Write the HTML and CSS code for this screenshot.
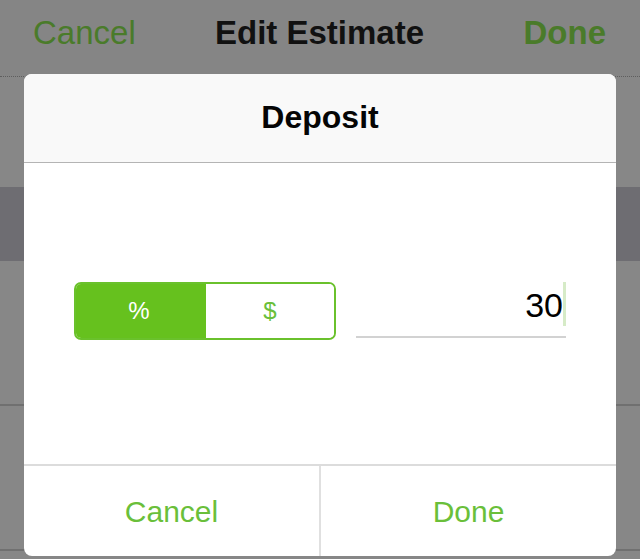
FILE: index.html
```html
<!DOCTYPE html>
<html>
<head>
<meta charset="utf-8">
<link rel="stylesheet" href="styles.css">
</head>
<body>
<div class="screen">
  <header class="nav">
    <span class="nav-btn nav-left">Cancel</span>
    <span class="nav-title">Edit Estimate</span>
    <span class="nav-btn nav-right">Done</span>
  </header>
  <div class="row row-a"></div>
  <div class="row row-dark"></div>
  <div class="row row-b"></div>
  <div class="row row-c"></div>
  <div class="row row-d"></div>

  <div class="modal">
    <div class="modal-head">Deposit</div>
    <div class="modal-body">
      <div class="segmented">
        <div class="seg seg-on">%</div>
        <div class="seg">$</div>
      </div>
      <div class="field">
        <span class="field-value">30</span>
        <span class="caret"></span>
      </div>
    </div>
    <div class="modal-foot">
      <div class="foot-btn">Cancel</div>
      <div class="foot-btn foot-right">Done</div>
    </div>
  </div>
</div>
</body>
</html>
```
FILE: styles.css
```css
* { box-sizing: border-box; }
html, body {
  margin: 0;
  padding: 0;
  background: #878787;
  font-family: "Liberation Sans", Arial, sans-serif;
}
.screen {
  position: relative;
  width: 640px;
  height: 559px;
  overflow: hidden;
  background: #878787;
}
.nav {
  height: 77px;
  display: grid;
  grid-template-columns: 1fr auto 1fr;
  align-items: center;
  padding: 0 34px 11px 33px;
  border-bottom: 1px dotted #5e5e5e;
  background: #858585;
}
.nav-btn {
  font-size: 33px;
  color: #4a7b2a;
}
.nav-left { justify-self: start; }
.nav-right { justify-self: end; font-weight: bold; }
.nav-title {
  font-size: 33px;
  font-weight: bold;
  color: #111111;
}
.row-a { height: 110px; }
.row-dark { height: 74px; background: #6e6d72; }
.row-b { height: 145px; border-bottom: 2px solid #707070; }
.row-c { height: 145px; border-bottom: 2px solid #707070; }

.modal {
  position: absolute;
  left: 24px;
  top: 74px;
  width: 592px;
  height: 482px;
  border-radius: 8px;
  overflow: hidden;
  background: #ffffff;
  display: flex;
  flex-direction: column;
}
.modal-head {
  height: 89px;
  flex: none;
  display: flex;
  align-items: center;
  justify-content: center;
  background: #f9f9f9;
  border-bottom: 1px solid #b4b4b4;
  font-size: 32px;
  font-weight: bold;
  color: #050505;
  padding-bottom: 1px;
}
.modal-body {
  flex: 1;
  display: flex;
  align-items: flex-start;
  gap: 20px;
  padding: 119px 50px 0;
}
.segmented {
  width: 262px;
  height: 58px;
  flex: none;
  display: flex;
  border: 2px solid #6ac12c;
  border-radius: 7px;
  overflow: hidden;
}
.seg {
  flex: 1;
  display: flex;
  align-items: center;
  justify-content: center;
  font-size: 24px;
  color: #6abf3a;
  background: #ffffff;
}
.seg-on {
  flex: 0 0 130px;
  background: #66c11e;
  color: #ffffff;
  padding-right: 4px;
}
.field {
  flex: 1;
  height: 56px;
  display: flex;
  justify-content: flex-end;
  align-items: flex-start;
  border-bottom: 2px solid #d2d2d2;
}
.field-value {
  font-size: 34px;
  line-height: 44px;
  padding-top: 1px;
  color: #000000;
}
.caret {
  width: 3px;
  height: 44px;
  background: #d6ebc7;
}
.modal-foot {
  height: 92px;
  flex: none;
  display: flex;
  border-top: 2px solid #dcdcdc;
}
.foot-btn {
  flex: 1;
  display: flex;
  align-items: center;
  justify-content: center;
  font-size: 30px;
  color: #6abf3a;
  padding-top: 2px;
}
.foot-right {
  border-left: 2px solid #e0e0e0;
}
```
